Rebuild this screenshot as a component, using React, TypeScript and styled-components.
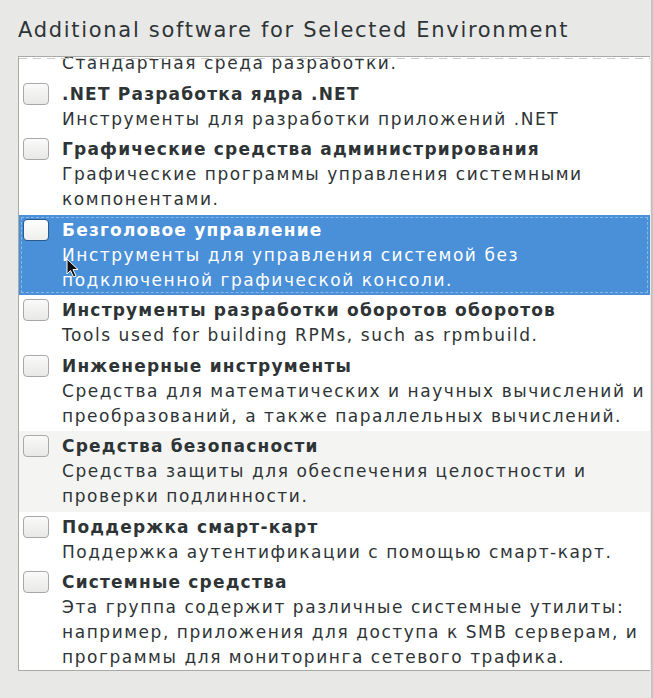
import styled, { createGlobalStyle } from 'styled-components';

const GlobalStyle = createGlobalStyle`
  html, body {
    margin: 0;
    padding: 0;
    background: #e8e8e7;
  }
  body {
    font-family: "DejaVu Sans", "Noto Sans", sans-serif;
    color: #2e3436;
  }
`;

type Group = {
  title: string;
  desc: string[];
  state?: 'selected' | 'hover';
};

const groups: Group[] = [
  { title: 'Средства разработки', desc: ['Стандартная среда разработки.'] },
  { title: '.NET Разработка ядра .NET', desc: ['Инструменты для разработки приложений .NET'] },
  {
    title: 'Графические средства администрирования',
    desc: ['Графические программы управления системными', 'компонентами.'],
  },
  {
    title: 'Безголовое управление',
    desc: ['Инструменты для управления системой без', 'подключенной графической консоли.'],
    state: 'selected',
  },
  { title: 'Инструменты разработки оборотов оборотов', desc: ['Tools used for building RPMs, such as rpmbuild.'] },
  {
    title: 'Инженерные инструменты',
    desc: ['Средства для математических и научных вычислений и', 'преобразований, а также параллельных вычислений.'],
  },
  {
    title: 'Средства безопасности',
    desc: ['Средства защиты для обеспечения целостности и', 'проверки подлинности.'],
    state: 'hover',
  },
  { title: 'Поддержка смарт-карт', desc: ['Поддержка аутентификации с помощью смарт-карт.'] },
  {
    title: 'Системные средства',
    desc: [
      'Эта группа содержит различные системные утилиты:',
      'например, приложения для доступа к SMB серверам, и',
      'программы для мониторинга сетевого трафика.',
    ],
  },
];

const Page = styled.div`
  width: 653px;
  height: 698px;
  box-sizing: border-box;
  padding: 15px 0 0 18px;
  border-right: 2px solid #c4c4c2;
  overflow: hidden;
`;

const Heading = styled.h1`
  margin: 0;
  height: 41px;
  font-size: 21px;
  font-weight: 400;
  line-height: 30px;
  letter-spacing: 1.7px;
  color: #2e3436;
  white-space: nowrap;
`;

const ListBox = styled.div`
  position: relative;
  width: 632px;
  height: 615px;
  box-sizing: border-box;
  border: 1px solid #a9a9a6;
  border-right: none;
  background: #ffffff;
  overflow: hidden;
`;

const Undershoot = styled.div`
  position: absolute;
  left: 0;
  right: 0;
  top: 1px;
  height: 1px;
  background: repeating-linear-gradient(90deg, #c9c9c7 0 8px, transparent 8px 14px);
`;

const Rows = styled.div`
  margin-top: -34px;
`;

const Row = styled.div<{ $state?: 'selected' | 'hover' }>`
  display: flex;
  align-items: flex-start;
  gap: 13px;
  padding: 3px 0 2.5px 4px;
  background: ${(p) => (p.$state === 'selected' ? '#4a90d9' : p.$state === 'hover' ? '#f4f4f3' : 'transparent')};
  color: ${(p) => (p.$state === 'selected' ? '#ffffff' : '#2e3436')};
  outline: ${(p) => (p.$state === 'selected' ? '1px dashed rgba(255,255,255,0.35)' : 'none')};
  outline-offset: -3px;
`;

const Check = styled.span<{ $selected?: boolean }>`
  flex: none;
  width: 26px;
  height: 22px;
  margin-top: 1px;
  box-sizing: border-box;
  border-radius: 4px;
  border: 1px solid ${(p) => (p.$selected ? '#2a5a8c' : '#a8a8a5')};
  background: ${(p) =>
    p.$selected ? 'linear-gradient(#ffffff, #eeeeec)' : 'linear-gradient(#fafafa, #e8e8e6)'};
`;

const Text = styled.div`
  display: flex;
  flex-direction: column;
  font-size: 17px;
  line-height: 25px;
  white-space: nowrap;
`;

const Title = styled.span`
  font-weight: 700;
  letter-spacing: 1.2px;
`;

const Desc = styled.span`
  font-weight: 400;
  letter-spacing: 1.55px;
`;

const Cursor = styled.svg`
  position: absolute;
  left: 47px;
  top: 201px;
`;

export default function App() {
  return (
    <>
      <GlobalStyle />
      <Page>
        <Heading>Additional software for Selected Environment</Heading>
        <ListBox>
          <Rows>
            {groups.map((g) => (
              <Row key={g.title} $state={g.state}>
                <Check $selected={g.state === 'selected'} />
                <Text>
                  <Title>{g.title}</Title>
                  {g.desc.map((d) => (
                    <Desc key={d}>{d}</Desc>
                  ))}
                </Text>
              </Row>
            ))}
          </Rows>
          <Undershoot />
          <Cursor width="14" height="20" viewBox="0 0 14 20">
            <path d="M1 1 L1 16 L4.5 12.5 L7.5 19 L10 18 L7 11.5 L12 11.5 Z" fill="#111" stroke="#fff" strokeWidth="1" />
          </Cursor>
        </ListBox>
      </Page>
    </>
  );
}
